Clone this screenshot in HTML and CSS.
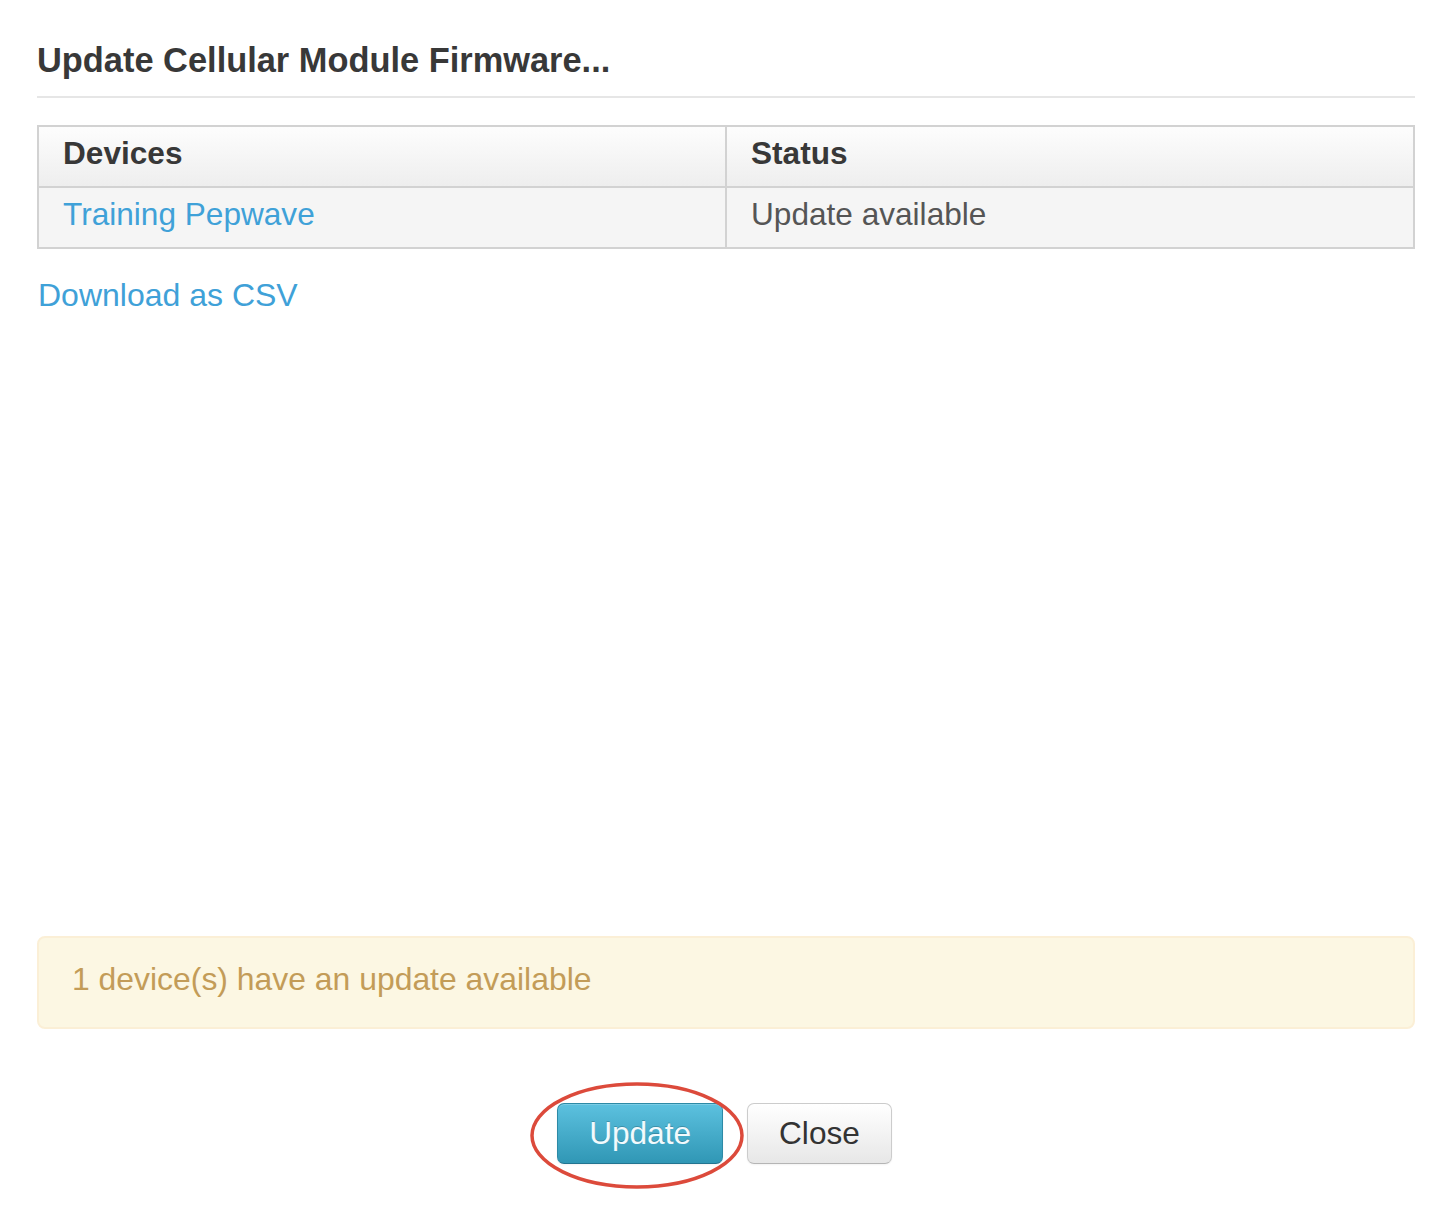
FILE: index.html
```html
<!DOCTYPE html>
<html lang="en">
<head>
<meta charset="utf-8">
<title>Update Cellular Module Firmware</title>
<link rel="stylesheet" href="styles.css">
</head>
<body>
<div class="dialog">
  <h3 class="dialog-title">Update Cellular Module Firmware...</h3>
  <div class="dialog-body">
    <table class="device-table">
      <thead>
        <tr><th>Devices</th><th>Status</th></tr>
      </thead>
      <tbody>
        <tr><td><a class="link" href="#">Training Pepwave</a></td><td>Update available</td></tr>
      </tbody>
    </table>
    <a class="link csv-link" href="#">Download as CSV</a>
  </div>
  <div class="alert">1 device(s) have an update available</div>
  <div class="dialog-footer">
    <span class="highlight-wrap">
      <button class="btn btn-info" type="button">Update</button>
      <svg class="highlight" width="214" height="107" viewBox="0 0 214 107" aria-hidden="true">
        <ellipse cx="107" cy="53.5" rx="105" ry="51.5" fill="none" stroke="#dc4a3b" stroke-width="3.5"/>
      </svg>
    </span>
    <button class="btn btn-default" type="button">Close</button>
  </div>
</div>
</body>
</html>
```
FILE: styles.css
```css
html, body {
  margin: 0;
  padding: 0;
  background: #ffffff;
}

body {
  font-family: "Liberation Sans", Arial, sans-serif;
  color: #555555;
}

.dialog {
  padding: 0 35px 43px 37px;
}

.dialog-title {
  margin: 0;
  padding: 40px 0 16px;
  font-size: 34.4px;
  line-height: 40px;
  font-weight: bold;
  color: #383838;
  border-bottom: 2px solid #e6e6e6;
}

.dialog-body {
  height: 838px;
  padding-top: 27px;
  box-sizing: border-box;
}

.device-table {
  width: 100%;
  table-layout: fixed;
  border-collapse: collapse;
  border: 2px solid #d2d2d2;
  font-size: 31.6px;
}

.device-table th,
.device-table td {
  height: 59px;
  box-sizing: border-box;
  padding: 9px 24px 15px;
  line-height: 35px;
  text-align: left;
  border: 2px solid #d2d2d2;
  vertical-align: top;
}

.device-table th {
  font-weight: bold;
  color: #383838;
  background: linear-gradient(to bottom, #fdfdfd, #eeeeee);
}

.device-table td {
  background: #f5f5f5;
  color: #555555;
}

.link {
  color: #3fa1d8;
  text-decoration: none;
}

.csv-link {
  display: inline-block;
  margin-top: 26px;
  margin-left: 1px;
  font-size: 32px;
  line-height: 40px;
}

.alert {
  padding: 21px 32px 28px 33px;
  font-size: 31.9px;
  line-height: 40px;
  color: #c39c58;
  background: #fcf7e3;
  border: 2px solid #fbefd6;
  border-radius: 8px;
}

.dialog-footer {
  display: flex;
  justify-content: center;
  gap: 24px;
  margin-top: 74px;
  padding-right: 3px;
}

.highlight-wrap {
  position: relative;
  display: inline-flex;
}

.highlight {
  position: absolute;
  left: -27px;
  top: -21px;
  overflow: visible;
  pointer-events: none;
}

.btn {
  font-family: "Liberation Sans", Arial, sans-serif;
  font-size: 31.6px;
  line-height: 59px;
  padding: 0 31px;
  margin: 0;
  border-radius: 7px;
  cursor: pointer;
}

.btn-info {
  color: #f2fafd;
  text-shadow: 0 -1px 0 rgba(0, 0, 0, 0.2);
  background: linear-gradient(to bottom, #5cc1df, #3097b5);
  border: 1px solid #2d8aa6;
  border-bottom-color: #227490;
  box-shadow: inset 0 1px 0 rgba(255, 255, 255, 0.2), 0 1px 2px rgba(0, 0, 0, 0.05);
}

.btn-default {
  color: #333333;
  background: linear-gradient(to bottom, #ffffff, #e7e7e7);
  border: 1px solid #cccccc;
  border-bottom-color: #b5b5b5;
  box-shadow: inset 0 1px 0 rgba(255, 255, 255, 0.2), 0 1px 2px rgba(0, 0, 0, 0.05);
}
```
